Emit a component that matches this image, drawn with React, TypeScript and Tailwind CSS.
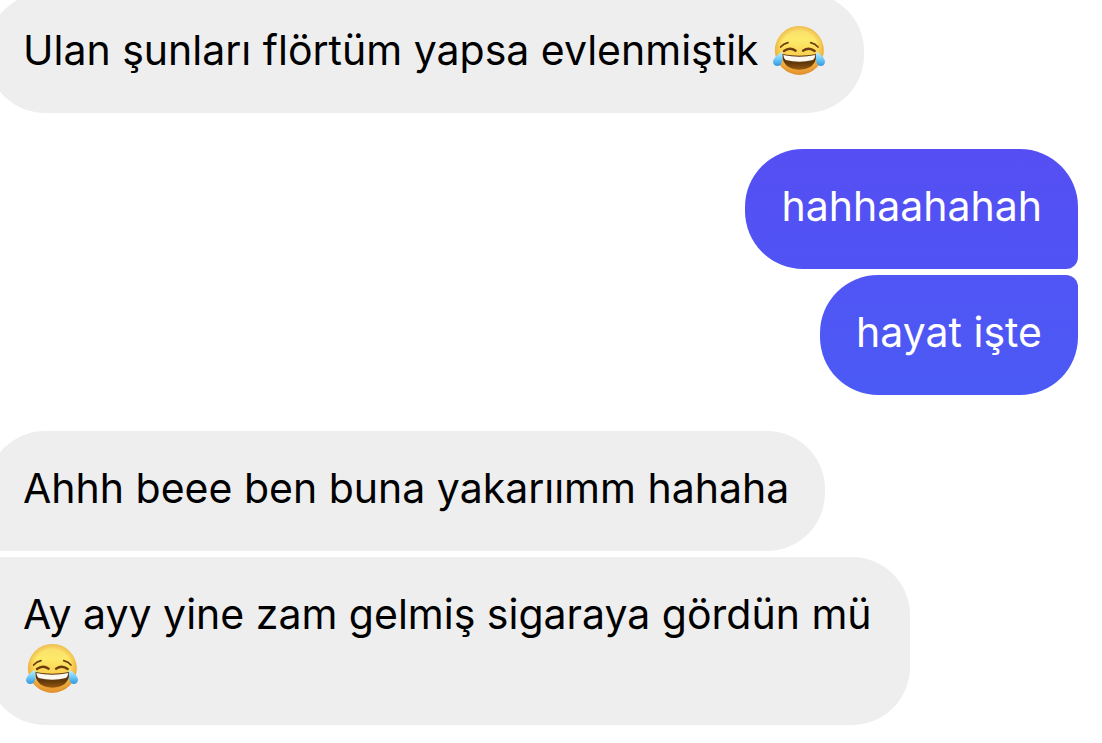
import { useId } from 'react';
import clsx from 'clsx';

interface Message {
  text: string;
  emoji?: boolean;
  shape: string;
}

interface MessageGroup {
  sender: 'me' | 'them';
  messages: Message[];
}

const groups: MessageGroup[] = [
  {
    sender: 'them',
    messages: [
      { text: 'Ulan şunları flörtüm yapsa evlenmiştik', emoji: true, shape: 'rounded-[58px] pb-9' }
    ]
  },
  {
    sender: 'me',
    messages: [
      { text: 'hahhaahahah', shape: 'rounded-[58px] rounded-br-xl pb-9 from-[#554ff3] to-[#5053f4]' },
      { text: 'hayat işte', shape: 'rounded-[58px] rounded-tr-xl pb-9 from-[#5055f4] to-[#4b5af5]' }
    ]
  },
  {
    sender: 'them',
    messages: [
      { text: 'Ahhh beee ben buna yakarıımm hahaha', shape: 'rounded-[58px] rounded-bl-xl pb-9' },
      { text: 'Ay ayy yine zam gelmiş sigaraya gördün mü', emoji: true, shape: 'rounded-[58px] rounded-tl-xl pb-[30px]' }
    ]
  }
];

const JoyEmoji = () => {
  const id = useId();
  const face = `${id}-face`;
  const shade = `${id}-shade`;
  const mouth = `${id}-mouth`;
  const tear = `${id}-tear`;

  return (
    <svg
      role="img"
      aria-label="😂"
      viewBox="34 23 156 147"
      className="mx-[3px] inline-block h-[49px] w-[52px] align-[-10px]"
    >
      <defs>
        <linearGradient id={face} x1="0" y1="0" x2="0" y2="1">
          <stop offset="0" stopColor="#f9dc6c" />
          <stop offset="0.3" stopColor="#fdea6a" />
          <stop offset="0.6" stopColor="#fbd04f" />
          <stop offset="1" stopColor="#ea9430" />
        </linearGradient>
        <radialGradient id={shade} cx="0.5" cy="0.48" r="0.53">
          <stop offset="0.7" stopColor="#e08a1e" stopOpacity="0" />
          <stop offset="0.88" stopColor="#e39a30" stopOpacity="0.4" />
          <stop offset="1" stopColor="#d8852c" stopOpacity="0.9" />
        </radialGradient>
        <linearGradient id={mouth} x1="0" y1="0" x2="0" y2="1">
          <stop offset="0" stopColor="#4e2b08" />
          <stop offset="0.6" stopColor="#643a0b" />
          <stop offset="1" stopColor="#94590f" />
        </linearGradient>
        <linearGradient id={tear} x1="0" y1="0" x2="0" y2="1">
          <stop offset="0" stopColor="#c4effd" />
          <stop offset="0.5" stopColor="#6fcaf7" />
          <stop offset="1" stopColor="#3495df" />
        </linearGradient>
      </defs>
      <circle cx="113" cy="96" r="73" fill={`url(#${face})`} />
      <circle cx="113" cy="96" r="73" fill={`url(#${shade})`} />
      <g fill="none" stroke="#6b3d0e" strokeLinecap="round">
        <path d="M57 86 Q65 76 79 73" strokeWidth="5" />
        <path d="M169 86 Q161 76 147 73" strokeWidth="5" />
        <path d="M67 98 Q84 85 102 97" strokeWidth="7" />
        <path d="M124 97 Q142 85 159 98" strokeWidth="7" />
      </g>
      <path d="M61 107 Q113 118 165 107 Q163 153 113 154 Q63 153 61 107Z" fill={`url(#${mouth})`} />
      <path d="M65 110 Q113 121 161 110 Q160 121 154 125 Q113 136 72 125 Q66 121 65 110Z" fill="#fdf9f0" />
      <path d="M62 101 C52 103 35 119 34 130 C34 142 47 147 56 140 C64 132 63 115 62 101Z" fill={`url(#${tear})`} />
      <path d="M164 101 C174 103 189 119 190 130 C190 142 177 147 169 140 C161 132 162 115 164 101Z" fill={`url(#${tear})`} />
    </svg>
  );
};

const Bubble = ({ message, mine }: { message: Message; mine: boolean }) => (
  <li
    className={clsx(
      'max-w-[923px] px-9 pt-[30px]',
      mine ? 'bg-linear-to-b text-white' : 'bg-[#eeeeee] text-black',
      message.shape
    )}
  >
    {message.text}
    {message.emoji && (
      <>
        {' '}
        <JoyEmoji />
      </>
    )}
  </li>
);

export default function App() {
  return (
    <main className="overflow-hidden bg-white font-['Inter','Noto_Sans',sans-serif] text-[41px] leading-[54px]">
      {/* The list is scrolled slightly, so the first bubble runs past the top edge */}
      <div className="-mt-[7px] -ml-[13px] flex flex-col gap-9 pr-6 pb-[18px]">
        {groups.map((group, i) => (
          <ul
            key={i}
            className={clsx('flex flex-col gap-1.5', group.sender === 'me' ? 'items-end' : 'items-start')}
          >
            {group.messages.map((message) => (
              <Bubble key={message.text} message={message} mine={group.sender === 'me'} />
            ))}
          </ul>
        ))}
      </div>
    </main>
  );
}
